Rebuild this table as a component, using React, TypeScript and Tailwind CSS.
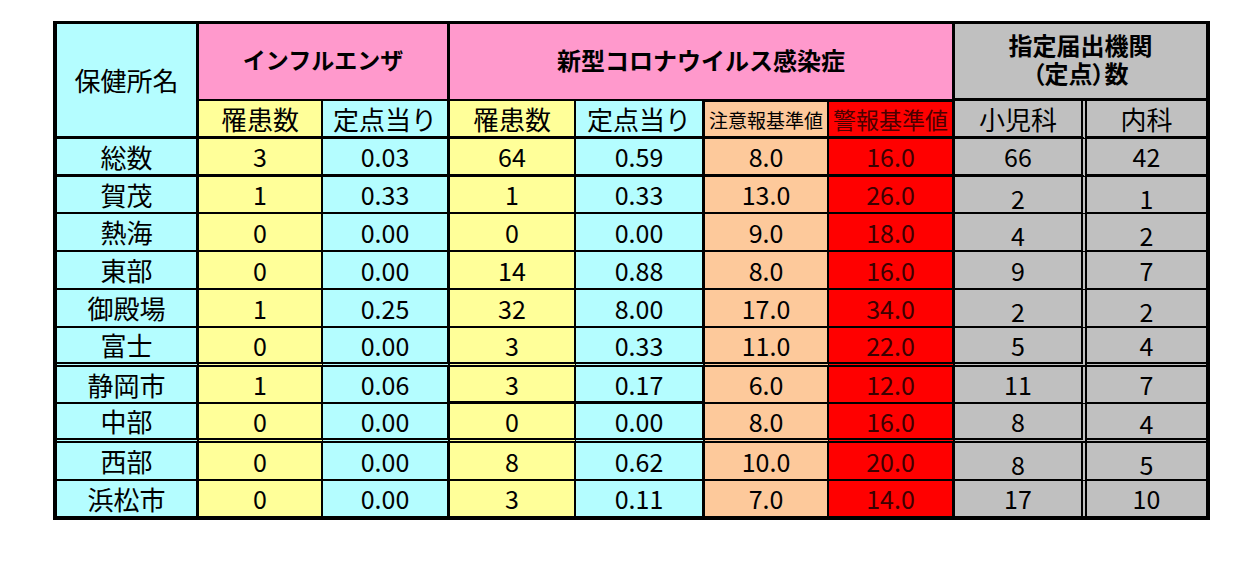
const FONT = "font-['Noto_Sans_CJK_JP','Noto_Sans',sans-serif]";

interface Row {
  name: string;
  fluCases: string;
  fluRate: string;
  covCases: string;
  covRate: string;
  caution: string;
  alarm: string;
  pediatric: string;
  internal: string;
  // bottom border style of the row
  bottom: "thin" | "thick" | "double" | "last";
  // 小児科/内科 numbers sit a little lower in some rows
  low?: boolean;
}

const rows: Row[] = [
  { name: "総数", fluCases: "3", fluRate: "0.03", covCases: "64", covRate: "0.59", caution: "8.0", alarm: "16.0", pediatric: "66", internal: "42", bottom: "thick" },
  { name: "賀茂", fluCases: "1", fluRate: "0.33", covCases: "1", covRate: "0.33", caution: "13.0", alarm: "26.0", pediatric: "2", internal: "1", bottom: "thin", low: true },
  { name: "熱海", fluCases: "0", fluRate: "0.00", covCases: "0", covRate: "0.00", caution: "9.0", alarm: "18.0", pediatric: "4", internal: "2", bottom: "thin", low: true },
  { name: "東部", fluCases: "0", fluRate: "0.00", covCases: "14", covRate: "0.88", caution: "8.0", alarm: "16.0", pediatric: "9", internal: "7", bottom: "thin" },
  { name: "御殿場", fluCases: "1", fluRate: "0.25", covCases: "32", covRate: "8.00", caution: "17.0", alarm: "34.0", pediatric: "2", internal: "2", bottom: "thin", low: true },
  { name: "富士", fluCases: "0", fluRate: "0.00", covCases: "3", covRate: "0.33", caution: "11.0", alarm: "22.0", pediatric: "5", internal: "4", bottom: "double" },
  { name: "静岡市", fluCases: "1", fluRate: "0.06", covCases: "3", covRate: "0.17", caution: "6.0", alarm: "12.0", pediatric: "11", internal: "7", bottom: "thin" },
  { name: "中部", fluCases: "0", fluRate: "0.00", covCases: "0", covRate: "0.00", caution: "8.0", alarm: "16.0", pediatric: "8", internal: "4", bottom: "double" },
  { name: "西部", fluCases: "0", fluRate: "0.00", covCases: "8", covRate: "0.62", caution: "10.0", alarm: "20.0", pediatric: "8", internal: "5", bottom: "thin", low: true },
  { name: "浜松市", fluCases: "0", fluRate: "0.00", covCases: "3", covRate: "0.11", caution: "7.0", alarm: "14.0", pediatric: "17", internal: "10", bottom: "last" },
];

// right border for each of the 9 columns
const RIGHT = [
  "border-r-[3px]",
  "border-r-2",
  "border-r-[3px]",
  "border-r-2",
  "border-r-[3px]",
  "border-r-2",
  "border-r-[3px]",
  "border-r-[6px] [border-right-style:double]",
  "",
];

const BG = [
  "bg-[#b4fdff]",
  "bg-[#ffff99]",
  "bg-[#b4fdff]",
  "bg-[#ffff99]",
  "bg-[#b4fdff]",
  "bg-[#fdc99b]",
  "bg-[#ff0000] text-[#3d0000]",
  "bg-[#c0c0c0]",
  "bg-[#c0c0c0]",
];

const BOTTOM = {
  thin: "border-b-2",
  thick: "border-b-[3px]",
  double: "border-b-[5px] [border-bottom-style:double]",
  last: "",
};

function Cell({
  className = "",
  children,
}: {
  className?: string;
  children?: React.ReactNode;
}) {
  return (
    <div
      className={`flex items-center justify-center border-black leading-none ${className}`}
    >
      {children}
    </div>
  );
}

export default function App() {
  return (
    <div className={`bg-white w-[1256px] h-[584px] pt-[21px] pl-[53px] ${FONT}`}>
      <div className="grid w-[1157px] grid-cols-[142px_124px_127px_126px_129px_124px_126px_132px_119px] grid-rows-[77px_38px_38px_37px_38px_38px_38px_39px_37px_39px_38px_35px] border-t-[3px] border-l-4 border-r-4 border-b-4 border-black text-black">
        {/* header row 1 */}
        <Cell className={`row-span-2 ${RIGHT[0]} border-b-[3px] ${BG[0]} text-[26px]`}>
          保健所名
        </Cell>
        <Cell className={`col-span-2 ${RIGHT[2]} border-b-2 bg-[#ff99cc] text-[23px] font-bold pb-1`}>
          インフルエンザ
        </Cell>
        <Cell className={`col-span-4 ${RIGHT[6]} border-b-2 bg-[#ff99cc] text-[24px] font-bold pb-1`}>
          新型コロナウイルス感染症
        </Cell>
        <Cell className="col-span-2 flex-col border-b-[3px] bg-[#c0c0c0] text-[24px] font-bold pb-1">
          <div className="leading-[28px]">指定届出機関</div>
          <div className="leading-[28px] [font-feature-settings:'palt']">
            （定点）数
          </div>
        </Cell>

        {/* header row 2 */}
        <Cell className={`${RIGHT[1]} border-b-[3px] ${BG[1]} text-[26px]`}>罹患数</Cell>
        <Cell className={`${RIGHT[2]} border-b-[3px] ${BG[2]} text-[26px]`}>定点当り</Cell>
        <Cell className={`${RIGHT[3]} border-b-[3px] ${BG[3]} text-[26px]`}>罹患数</Cell>
        <Cell className={`${RIGHT[4]} border-b-[3px] ${BG[4]} text-[26px]`}>定点当り</Cell>
        <Cell className={`${RIGHT[5]} border-t border-b-[3px] ${BG[5]} text-[19px]`}>
          注意報基準値
        </Cell>
        <Cell className={`${RIGHT[6]} border-t border-b-[3px] bg-[#ff0000] text-[#4a0000] text-[23px]`}>
          警報基準値
        </Cell>
        <Cell className={`${RIGHT[7]} border-b-[3px] ${BG[7]} text-[26px]`}>小児科</Cell>
        <Cell className={`border-b-[3px] ${BG[8]} text-[26px]`}>内科</Cell>

        {/* data rows */}
        {rows.map((row) => {
          const values = [
            row.name,
            row.fluCases,
            row.fluRate,
            row.covCases,
            row.covRate,
            row.caution,
            row.alarm,
            row.pediatric,
            row.internal,
          ];
          return values.map((v, i) => {
            let bottom = BOTTOM[row.bottom];
            // 静岡市: heavier line under the COVID columns
            if (row.name === "静岡市" && (i === 3 || i === 4)) {
              bottom = "border-b-[3px]";
            }
            let shift = row.low && i >= 7 ? "pt-[7px]" : "";
            if (row.name === "中部" && i === 8) shift = "pt-[4px]";
            const size = i === 0 ? "text-[26px]" : "text-[25px]";
            return (
              <Cell
                key={`${row.name}-${i}`}
                className={`${RIGHT[i]} ${bottom} ${BG[i]} ${size} ${shift}`}
              >
                {v}
              </Cell>
            );
          });
        })}
      </div>
    </div>
  );
}
